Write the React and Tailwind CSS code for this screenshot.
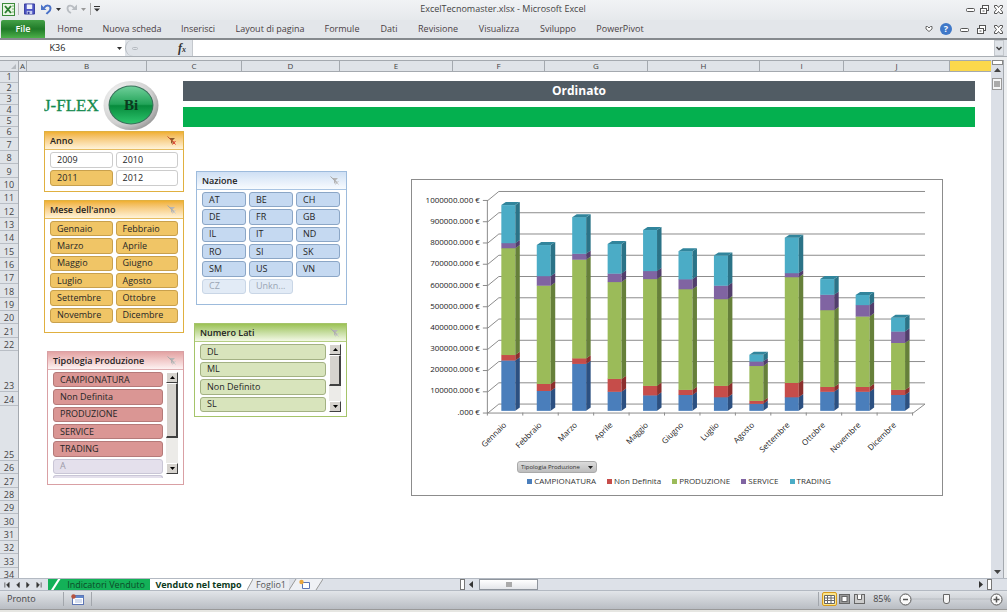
import { useState } from "react";
import clsx from "clsx";

const ribbonTabs = [
  { label: "Home", width: "w-[50px]" },
  { label: "Nuova scheda", width: "w-[74px]" },
  { label: "Inserisci", width: "w-[58px]" },
  { label: "Layout di pagina", width: "w-[86px]" },
  { label: "Formule", width: "w-[58px]" },
  { label: "Dati", width: "w-[36px]" },
  { label: "Revisione", width: "w-[62px]" },
  { label: "Visualizza", width: "w-[60px]" },
  { label: "Sviluppo", width: "w-[58px]" },
  { label: "PowerPivot", width: "w-[66px]" },
];

const columns = [
  { name: "A", width: "w-2" },
  { name: "B", width: "w-[120px]" },
  { name: "C", width: "w-[95px]" },
  { name: "D", width: "w-[98px]" },
  { name: "E", width: "w-[113px]" },
  { name: "F", width: "w-[92px]" },
  { name: "G", width: "w-[103px]" },
  { name: "H", width: "w-[112px]" },
  { name: "I", width: "w-[84px]" },
  { name: "J", width: "w-[106px]" },
];

// Altezze delle righe: le prime sei sono basse, 23 e 25 sono alte
function rowHeight(row) {
  if (row <= 6) return "h-[11px] leading-[10px]";
  if (row === 23) return "h-[41px] leading-[11px]";
  if (row === 25) return "h-[55px] leading-[11px]";
  return row % 3 === 0 ? "h-[14px] leading-[11px]" : "h-[13px] leading-[11px]";
}

const rows = Array.from({ length: 34 }, (_, i) => i + 1);

const anni = ["2009", "2010", "2011", "2012"];
const mesi = [
  "Gennaio", "Febbraio", "Marzo", "Aprile", "Maggio", "Giugno",
  "Luglio", "Agosto", "Settembre", "Ottobre", "Novembre", "Dicembre",
];
const nazioni = [
  "AT", "BE", "CH", "DE", "FR", "GB", "IL", "IT", "ND",
  "RO", "SI", "SK", "SM", "US", "VN", "CZ", "Unkn...",
];
const lati = ["DL", "ML", "Non Definito", "SL"];
const tipologie = ["CAMPIONATURA", "Non Definita", "PRODUZIONE", "SERVICE", "TRADING", "A"];

const series = [
  { name: "CAMPIONATURA", front: "#4a7ebb", side: "#2c5081", top: "#38639a" },
  { name: "Non Definita", front: "#c64d4a", side: "#8c2f2d", top: "#a03c3a" },
  { name: "PRODUZIONE", front: "#9bbb59", side: "#66803a", top: "#7c9848" },
  { name: "SERVICE", front: "#8064a2", side: "#523e6c", top: "#664f84" },
  { name: "TRADING", front: "#4bacc6", side: "#2b7387", top: "#31859c" },
];

// Valori in migliaia di euro, uno per serie
const ordinato = [
  [238, 26, 505, 24, 179],
  [94, 33, 465, 45, 146],
  [222, 26, 467, 28, 172],
  [90, 61, 458, 40, 139],
  [73, 45, 505, 38, 193],
  [75, 24, 476, 47, 132],
  [64, 54, 410, 64, 142],
  [33, 14, 165, 21, 31],
  [64, 68, 500, 19, 167],
  [90, 23, 363, 73, 73],
  [90, 23, 333, 54, 47],
  [75, 24, 222, 54, 64],
];

const themes = {
  orange: {
    box: "border-[#e0b040]",
    head: "from-[#f0b030] to-[#fff3d8] border-[#e6bd62]",
    on: "bg-[#f0c566] border-[#c8a04c]",
  },
  blue: {
    box: "border-[#9dbbdc]",
    head: "from-[#cfe0f4] to-[#f8fbfe] border-[#a9c4e2]",
    on: "bg-[#c5d9f1] border-[#8ba6c6]",
  },
  green: {
    box: "border-[#a5c46a]",
    head: "from-[#9cc254] to-[#f3f8e6] border-[#b4ce82]",
    on: "bg-[#d8e4bc] border-[#a3b183]",
  },
  red: {
    box: "border-[#d9a0a4]",
    head: "from-[#e3a3a3] to-[#fdf2f2] border-[#dfb0b3]",
    on: "bg-[#da9694] border-[#b57a79]",
  },
};

function ClearFilterIcon({ active }) {
  const color = active ? "#8a5a2c" : "#b5b5b5";
  return (
    <svg width="11" height="11" viewBox="0 0 11 11" aria-hidden="true">
      <path d="M3 3h6L6.500 5.500V9L5 8V5.500z" fill={color} />
      <path d="M6.500 6l3 3.500M9.500 6l-3 3.500" stroke={active ? "#d8342a" : "#c8c8c8"} />
      <path d="M1.500 1.500l6.500 6" stroke={active ? "#c4512a" : "#a8a8a8"} />
    </svg>
  );
}

function SlicerScrollbar({ thumb }) {
  const arrow =
    "flex h-[11px] w-full shrink-0 items-center justify-center border border-b-[#404040] border-r-[#404040] border-l-white border-t-white bg-[#d6d3ce]";
  return (
    <div className="flex w-3 shrink-0 flex-col bg-[#ecebe8]">
      <button type="button" aria-label="Scorri su" className={arrow}>
        <svg width="5" height="3" viewBox="0 0 5 3"><path d="M0 3L2.500 0 5 3z" /></svg>
      </button>
      <div className={clsx("w-full border border-b-2 border-r-2 border-[#404040] border-l-white border-t-white bg-[#d6d3ce]", thumb)} />
      <div className="flex-1" />
      <button type="button" aria-label="Scorri giù" className={arrow}>
        <svg width="5" height="3" viewBox="0 0 5 3"><path d="M0 0h5L2.500 3z" /></svg>
      </button>
    </div>
  );
}

function Slicer({ title, theme, items, cols, selected, disabled = [], onToggle, filtered, className, bodyClass, thumb, more }) {
  const t = themes[theme];
  return (
    <section className={clsx("flex flex-col border bg-white", t.box, className)}>
      <header className={clsx("flex h-[18px] shrink-0 items-center justify-between border-b bg-linear-to-b pl-[5px] pr-[6px]", t.head)}>
        <h2 className="text-[9px] font-semibold text-[#222]">{title}</h2>
        <button type="button" aria-label={`Cancella filtro ${title}`}>
          <ClearFilterIcon active={filtered} />
        </button>
      </header>
      <div className={clsx("flex gap-[3px] overflow-hidden pl-[5px] pt-0.5", bodyClass)}>
        <div className={clsx("grid flex-1 auto-rows-fr gap-x-[3px] gap-y-0.5", cols)}>
          {items.map((item) => {
            const off = disabled.includes(item);
            return (
              <button
                key={item}
                type="button"
                disabled={off}
                onClick={() => onToggle?.(item)}
                className={clsx(
                  "flex min-w-0 items-center rounded-[3px] border pl-[6px] text-left text-[9px] leading-3",
                  off && theme === "blue" && "border-[#c9d6e6] bg-[#e2ebf6] text-[#9aa5b4]",
                  off && theme !== "blue" && "border-[#c9c6d6] bg-[#e4e0ec] text-[#9c9aa8]",
                  !off && (selected.includes(item) ? t.on : "border-[#ccc] bg-white"),
                  !off && "text-[#262626]"
                )}
              >
                {item}
              </button>
            );
          })}
        </div>
        {thumb && <SlicerScrollbar thumb={thumb} />}
      </div>
      {more && <div className="ml-[5px] mr-5 mt-px h-[3px] rounded-t-[3px] border border-b-0 border-[#c9c6d6] bg-[#e4e0ec]" />}
    </section>
  );
}

function Logo() {
  return (
    <svg className="h-[50px] w-[116px] shrink-0" viewBox="0 0 116 50" role="img" aria-label="J-FLEX Bi">
      <defs>
        <radialGradient id="ring" cx="0.35" cy="0.35" r="0.75">
          <stop offset="0" stopColor="#ffffff" />
          <stop offset="0.700" stopColor="#d0d0d0" />
          <stop offset="1" stopColor="#8e8e8e" />
        </radialGradient>
        <linearGradient id="orb" x1="0" y1="0" x2="0" y2="1">
          <stop offset="0" stopColor="#6fcf9a" />
          <stop offset="0.480" stopColor="#22a358" />
          <stop offset="0.520" stopColor="#078b3c" />
          <stop offset="1" stopColor="#2cc46c" />
        </linearGradient>
      </defs>
      <text x="0" y="30" fontSize="17" fill="#138a4e" stroke="#138a4e" strokeWidth="0.300" className="font-['Liberation_Serif',serif]">J-FLEX</text>
      <ellipse cx="87" cy="24.500" rx="27.500" ry="24.500" fill="url(#ring)" />
      <ellipse cx="87" cy="24" rx="22.500" ry="19.500" fill="#39705a" />
      <ellipse cx="87" cy="24" rx="21.500" ry="18.500" fill="url(#orb)" />
      <text x="87" y="29" textAnchor="middle" fontSize="15" fontWeight="bold" fill="#0b3a1e" className="font-['Liberation_Serif',serif]">Bi</text>
    </svg>
  );
}

function Chart() {
  const base = 231;
  const scale = 0.2118;
  return (
    <svg className="block w-full" viewBox="0 0 531 278" role="img" aria-label="Ordinato per mese">
      <g stroke="#8c8c8c" fill="none">
        {Array.from({ length: 11 }, (_, i) => {
          const back = 11.5 + i * 21.3;
          const front = 20.5 + i * 21.3;
          return <path key={i} d={`M71 ${front}h5L87 ${back}H514`} />;
        })}
        <path d="M75.500 20V233.500H502L514 224.500" />
        {Array.from({ length: 13 }, (_, i) => (
          <path key={i} d={`M${75.5 + i * 35.5} 233v3`} />
        ))}
      </g>
      <g fontSize="8" fill="#222" textAnchor="end">
        {Array.from({ length: 11 }, (_, i) => (
          <text key={i} x="68" y={23 + i * 21.2}>
            {i === 10 ? ".000 €" : `${(10 - i) * 100000}.000 €`}
          </text>
        ))}
      </g>
      {ordinato.map((values, m) => {
        const x = 89.5 + m * 35.5;
        let y = base;
        return (
          <g key={mesi[m]}>
            {values.map((value, s) => {
              const h = value * scale;
              y -= h;
              return (
                <g key={series[s].name}>
                  <rect x={x} y={y} width="14" height={h + 0.3} fill={series[s].front} />
                  <path d={`M${x + 14} ${y}l4.500 -3v${h}l-4.500 3.300z`} fill={series[s].side} />
                  {s === 4 && <path d={`M${x} ${y}l4.500 -3h14l-4.500 3z`} fill={series[s].top} />}
                </g>
              );
            })}
          </g>
        );
      })}
      <g fontSize="8" fill="#222" textAnchor="end">
        {mesi.map((mese, m) => (
          <text key={mese} transform={`translate(${95 + m * 35.5} 246) rotate(-45)`}>{mese}</text>
        ))}
      </g>
    </svg>
  );
}

function WindowButtons({ gap = "gap-[3px]" }) {
  return (
    <div className={clsx("flex items-center text-[#555]", gap)}>
      <button type="button" aria-label="Riduci a icona">
        <svg width="11" height="11" viewBox="0 0 11 11" fill="#fff" stroke="currentColor"><rect x="1.500" y="4.500" width="8" height="3" rx="1" /></svg>
      </button>
      <button type="button" aria-label="Ripristina">
        <svg width="11" height="11" viewBox="0 0 11 11" fill="#fff" stroke="currentColor"><rect x="3.500" y="1.500" width="6" height="5" /><rect x="1.500" y="4.500" width="6" height="5" /><path d="M3.500 7h2" /></svg>
      </button>
      <button type="button" aria-label="Chiudi">
        <svg width="11" height="11" viewBox="0 0 11 11" fill="#fff" stroke="currentColor"><path d="M1.500 1.500h2.500l1.500 2 1.500-2h2.500v1.500L7.500 5.500l2 2.500v1.500H7l-1.500-2-1.500 2H1.500V8l2-2.500-2-2.500z" /></svg>
      </button>
    </div>
  );
}

function TitleBar() {
  return (
    <header className="grid h-5 shrink-0 grid-cols-[1fr_auto_1fr] items-center bg-linear-to-b from-[#f1f3f5] to-[#e6e9ec] pb-0.5 pl-0.5 pr-[3px] text-[#444]">
      <div className="flex items-center">
        <svg width="13" height="13" viewBox="0 0 13 13">
          <rect x="0.500" y="0.500" width="12" height="12" fill="#e9f5e4" stroke="#3b8a3a" />
          <path d="M3 3l6 7M9 3l-6 7" stroke="#2b7d2e" strokeWidth="1.900" />
          <path d="M10 3h2M10 6h2M10 9h2" stroke="#74b66d" />
        </svg>
        <span className="mx-[3px] h-3 w-px bg-[#bbb]" />
        <button type="button" aria-label="Salva" className="ml-0.5">
          <svg width="11" height="12" viewBox="0 0 12 12">
            <path d="M0.500 0.500h11v11h-11z" fill="#4d55c4" stroke="#31389a" />
            <path d="M3 1h6v5H3z" fill="#eef1fb" />
            <path d="M3 8h6v3.500H3z" fill="#c8cef0" />
            <path d="M4 9h2v2.500H4z" fill="#31389a" />
          </svg>
        </button>
        <button type="button" aria-label="Annulla" className="ml-[6px] flex items-center gap-1">
          <svg width="11" height="12" viewBox="0 0 11 12" fill="none">
            <path d="M3 5C5 1.500 9.500 2 9.500 5.500 9.500 8.500 7 9 5.500 11" stroke="#4a72c8" strokeWidth="2" />
            <path d="M0 1.500V7h5.500z" fill="#4a72c8" />
          </svg>
          <svg width="5" height="3" viewBox="0 0 5 3"><path d="M0 0h5L2.500 3z" fill="#333" /></svg>
        </button>
        <button type="button" aria-label="Ripeti" className="ml-[5px] flex items-center gap-1">
          <svg width="11" height="12" viewBox="0 0 11 12" fill="none">
            <path d="M8 5C6 1.500 1.500 2 1.500 5.500 1.500 8 3 9 5 10" stroke="#b9bdc2" strokeWidth="1.800" />
            <path d="M11 1.500V7H5.500z" fill="#b9bdc2" />
          </svg>
          <svg width="5" height="3" viewBox="0 0 5 3"><path d="M0 0h5L2.500 3z" fill="#999" /></svg>
        </button>
        <span className="ml-1 mr-[3px] h-3 w-px bg-[#aaa]" />
        <button type="button" aria-label="Personalizza barra di accesso rapido">
          <svg width="6" height="6" viewBox="0 0 6 6"><path d="M0 0.500h6" stroke="#333" /><path d="M0 2.500h6L3 5.500z" fill="#333" /></svg>
        </button>
      </div>
      <h1 className="text-[9px] leading-[14px]">ExcelTecnomaster.xlsx - Microsoft Excel</h1>
      <div className="flex justify-end">
        <WindowButtons />
      </div>
    </header>
  );
}

function Ribbon() {
  return (
    <nav className="flex h-5 shrink-0 items-stretch border-b-2 border-[#868a8e] bg-[#e3e6ea] pl-px pr-[3px] text-[9px] text-[#4a3f44]">
      <button type="button" className="w-11 rounded-t-[2px] bg-linear-to-b from-[#43a047] via-[#1f7a28] to-[#4cb04a] font-semibold text-white">
        File
      </button>
      {ribbonTabs.map((tab) => (
        <button key={tab.label} type="button" className={clsx("whitespace-nowrap text-center", tab.width)}>
          {tab.label}
        </button>
      ))}
      <div className="ml-auto flex items-center gap-[7px]">
        <svg width="8" height="8" viewBox="0 0 8 8" fill="#fff" stroke="#666"><path d="M1 1.500h1.500L4 3l1.500-1.500H7V4L4 6.500 1 4z" /></svg>
        <button type="button" aria-label="Guida" className="flex h-3 w-3 items-center justify-center rounded-full bg-[#3f78c8] text-[9px] font-bold text-white">?</button>
        <WindowButtons gap="gap-1.5" />
      </div>
    </nav>
  );
}

function FormulaBar() {
  return (
    <div className="flex h-[17px] shrink-0 border-b border-[#a9aeb4] bg-[#dfe3e8] text-[10px]">
      <input aria-label="Casella nome" defaultValue="K36" className="w-[113px] bg-white pl-0.5 text-center text-[9px] text-[#222] outline-none" />
      <button type="button" aria-label="Apri casella nome" className="flex w-3 items-center justify-center bg-white">
        <svg width="5" height="3" viewBox="0 0 5 3"><path d="M0 0h5L2.500 3z" fill="#333" /></svg>
      </button>
      <div className="flex w-[67px] items-center justify-between rounded-l-full border-l border-[#b5bac0] bg-[#dfe3e8] px-1.5">
        <span className="h-[3px] w-1.5 rounded-full border border-[#b5bac0]" />
        <button type="button" aria-label="Inserisci funzione" className="font-['Liberation_Serif',serif] text-[12px] leading-none font-bold text-[#333] italic">
          f<span className="text-[8px]">x</span>
        </button>
      </div>
      <input aria-label="Barra della formula" className="min-w-0 flex-1 border-l border-[#c4c8cd] bg-white px-1 outline-none" />
      <button type="button" aria-label="Espandi barra della formula" className="mr-[3px] flex w-[10px] items-center justify-center border border-[#c4c8cd]">
        <svg width="6" height="5" viewBox="0 0 6 5" fill="none" stroke="#444" strokeWidth="1.500"><path d="M0.500 1L3 3.500 5.500 1" /></svg>
      </button>
    </div>
  );
}

function VerticalScrollbar() {
  return (
    <div className="mr-[3px] flex w-[13px] shrink-0 flex-col items-center border-r border-[#a4a9af] bg-[#dbdfe6]">
      <div className="mb-[3px] h-[5px] w-[11px] shrink-0 border border-[#888] bg-white" />
      <button type="button" aria-label="Scorri su" className="mb-1.5">
        <svg width="7" height="4" viewBox="0 0 7 4"><path d="M0 4L3.500 0 7 4z" fill="#444" /></svg>
      </button>
      <div className="flex h-3 w-[10px] shrink-0 items-center justify-center border border-[#999] bg-[#f4f5f6]">
        <div className="h-1.5 w-1.5 bg-[#aaa]" />
      </div>
      <button type="button" aria-label="Scorri giù" className="mt-auto mb-1">
        <svg width="7" height="4" viewBox="0 0 7 4"><path d="M0 0h7L3.500 4z" fill="#444" /></svg>
      </button>
    </div>
  );
}

function SheetTabs() {
  const navs = ["M1 0.500v6M6 0.500L3 3.500l3 3z", "M5 0.500L2 3.500l3 3z", "M2 0.500l3 3-3 3z", "M1 0.500l3 3-3 3zM6 0.500v6"];
  const labels = ["Primo foglio", "Foglio precedente", "Foglio successivo", "Ultimo foglio"];
  return (
    <div className="flex h-[13px] shrink-0 items-stretch border-y border-[#b3b9c2] bg-[#dde1e8] pr-[3px] text-[9px] leading-[11px]">
      <div className="flex w-12 items-center justify-around pr-1 pl-0.5">
        {navs.map((d, i) => (
          <button key={d} type="button" aria-label={labels[i]}>
            <svg width="6" height="6" viewBox="0 0 7 7"><path d={d} fill="#333" stroke="#333" strokeWidth="0.800" /></svg>
          </button>
        ))}
      </div>
      <button type="button" className="flex w-[102px] items-center bg-[#13b158] text-[#0c4a28]">
        <svg className="h-full w-[14px]" viewBox="0 0 14 11" preserveAspectRatio="none"><path d="M3 11L10 0h2.500L5.500 11z" fill="#fff" /></svg>
        <span className="flex-1 text-center">Indicatori Venduto</span>
      </button>
      <button type="button" className="w-[97px] bg-white text-center font-bold whitespace-nowrap text-[#0c3a20]">Venduto nel tempo</button>
      <button type="button" className="flex w-[42px] items-center bg-[#e9ecf1] text-[#555]">
        <svg className="h-full w-[6px]" viewBox="0 0 6 11" preserveAspectRatio="none"><path d="M0 0h6L0 11z" fill="#fff" /><path d="M0 11L6 0" stroke="#999" /></svg>
        <span className="flex-1 text-center">Foglio1</span>
      </button>
      <button type="button" aria-label="Inserisci foglio di lavoro">
        <svg width="34" height="11" viewBox="0 0 34 11">
          <path d="M0 11L7 0H34L27 11z" fill="#eff1f5" /><path d="M0 11L7 0M27 11L34 0" stroke="#999" />
          <path d="M13.500 3.500h7v6h-7z" fill="#fff" stroke="#5d76b5" />
          <circle cx="12.500" cy="3" r="2.200" fill="#eba73c" />
        </svg>
      </button>
      <div className="flex-[138]" />
      <div className="w-[5px] border border-[#777] bg-white" />
      <button type="button" aria-label="Scorri a sinistra" className="px-1">
        <svg width="4" height="7" viewBox="0 0 4 7"><path d="M4 0v7L0 3.500z" fill="#333" /></svg>
      </button>
      <div className="ml-[2px] flex w-[59px] items-center justify-center border border-[#8f959d] bg-linear-to-b from-white to-[#e4e6ea]">
        <div className="h-[5px] w-1.5 bg-[#aaa]" />
      </div>
      <div className="flex-[440]" />
      <button type="button" aria-label="Scorri a destra" className="px-1">
        <svg width="4" height="7" viewBox="0 0 4 7"><path d="M0 0v7l4-3.500z" fill="#333" /></svg>
      </button>
      <div className="mr-3 w-[5px] border border-[#777] bg-white" />
    </div>
  );
}

function StatusBar() {
  const [zoom, setZoom] = useState(85);
  return (
    <footer className="flex h-[18px] shrink-0 items-center bg-linear-to-b from-[#e2e5e9] to-[#b9bdc3] pr-1 pb-0.5 pl-[7px] text-[9px] text-[#444]">
      <span className="w-14">Pronto</span>
      <div className="flex h-[14px] items-center border-x border-[#a2a6ac] px-[7px]">
        <svg width="13" height="11" viewBox="0 0 13 11">
          <rect x="1.500" y="1.500" width="11" height="9" fill="#fff" stroke="#5d76b5" />
          <path d="M2 2h10v2H2z" fill="#5f87cc" />
          <path d="M4 6h7M4 8h7" stroke="#a9bbdf" />
          <circle cx="2.500" cy="2.500" r="2.200" fill="#b6523c" />
        </svg>
      </div>
      <div className="ml-auto flex items-center border-l border-[#a2a6ac] pl-[3px]">
        <button type="button" aria-label="Normale" className="flex h-[14px] w-[15px] items-center justify-center rounded-[2px] border border-[#d79a1c] bg-[#fde68a]">
          <svg width="11" height="9" viewBox="0 0 11 9" fill="#fff" stroke="#666"><path d="M0.500 0.500h10v8h-10zM0.500 3h10M0.500 5.500h10M3.500 0.500v8M7 0.500v8" /></svg>
        </button>
        <button type="button" aria-label="Layout di pagina" className="ml-0.5">
          <svg width="11" height="10" viewBox="0 0 11 10" stroke="#666"><rect x="0.500" y="0.500" width="10" height="9" fill="#999" /><rect x="3" y="2.500" width="5" height="5" fill="#fff" /></svg>
        </button>
        <button type="button" aria-label="Anteprima interruzioni di pagina" className="ml-1">
          <svg width="11" height="10" viewBox="0 0 11 10" stroke="#666"><rect x="0.500" y="0.500" width="10" height="9" fill="#ccc" /><path d="M3.500 0.500v5h4v-5" fill="#fff" /></svg>
        </button>
        <label htmlFor="zoom" className="w-[34px] text-center">{zoom}%</label>
        <button type="button" aria-label="Zoom indietro" onClick={() => setZoom((z) => Math.max(10, z - 5))}>
          <svg width="13" height="13" viewBox="0 0 13 13" fill="#fafafa" stroke="#555"><circle cx="6.500" cy="6.500" r="5.500" /><path d="M4 6.500h5" strokeWidth="1.500" /></svg>
        </button>
        <input
          id="zoom"
          type="range"
          min="10"
          max="180"
          value={zoom}
          onChange={(e) => setZoom(Number(e.target.value))}
          className="h-3 w-[78px] appearance-none bg-linear-to-b from-transparent from-45% via-[#8d9197] via-50% to-transparent to-55% [&::-webkit-slider-thumb]:h-[10px] [&::-webkit-slider-thumb]:w-[7px] [&::-webkit-slider-thumb]:appearance-none [&::-webkit-slider-thumb]:rounded-b-[3px] [&::-webkit-slider-thumb]:border [&::-webkit-slider-thumb]:border-[#666] [&::-webkit-slider-thumb]:bg-[#f5f5f5]"
        />
        <button type="button" aria-label="Zoom avanti" onClick={() => setZoom((z) => Math.min(180, z + 5))}>
          <svg width="13" height="13" viewBox="0 0 13 13" fill="#fafafa" stroke="#555"><circle cx="6.500" cy="6.500" r="5.500" /><path d="M3.500 6.500h6M6.500 3.500v6" strokeWidth="1.500" /></svg>
        </button>
      </div>
    </footer>
  );
}

export default function App() {
  const [anno, setAnno] = useState("2011");

  return (
    <div className="flex h-screen flex-col overflow-hidden bg-[#eceef0] font-['Open_Sans','Noto_Sans',sans-serif]">
      <TitleBar />
      <Ribbon />
      <FormulaBar />

      {/* Foglio di lavoro */}
      <div className="mt-[3px] flex min-h-0 flex-1">
        <div className="flex min-w-0 flex-1 flex-col">
          {/* Intestazioni di colonna */}
          <div className="flex h-3 shrink-0 border-y border-[#a4a9af] bg-[#dfe3e8] text-[8px] leading-[10px] text-[#444]">
            <div className="flex w-[19px] shrink-0 items-end justify-end border-r border-[#a4a9af] p-0.5">
              <svg width="5" height="5" viewBox="0 0 5 5"><path d="M5 0v5H0z" fill="#b5bac0" /></svg>
            </div>
            {columns.map((col) => (
              <div key={col.name} className={clsx("border-r border-[#a4a9af] text-center", col.width)}>{col.name}</div>
            ))}
            <div className="flex-1 bg-[#fbd84b]" />
          </div>

          <div className="flex min-h-0 flex-1 overflow-hidden">
            {/* Intestazioni di riga */}
            <ol className="w-[19px] shrink-0 border-r border-[#a4a9af] bg-[#dfe3e8] text-center text-[9px] text-[#444]">
              {rows.map((row) => (
                <li key={row} className={clsx("flex items-end justify-center border-b border-[#b9bec5]", rowHeight(row))}>{row}</li>
              ))}
            </ol>

            <main className="flex-1 bg-white pt-[9px] pl-[25px]">
              <div className="flex items-start pr-4">
                <Logo />
                <div className="ml-[23px] flex-1 space-y-1.5">
                  <h2 className="h-5 bg-[#515c64] text-center text-[12px] leading-5 font-bold text-white">Ordinato</h2>
                  <div className="h-5 bg-[#04b04f]" />
                </div>
              </div>

              <div className="flex items-start pr-12">
                <div className="flex w-[140px] shrink-0 flex-col">
                  <Slicer title="Anno" theme="orange" items={anni} cols="grid-cols-2" selected={[anno]} onToggle={setAnno} filtered className="h-[61px]" bodyClass="h-9 pr-[5px]" />
                  <Slicer title="Mese dell'anno" theme="orange" items={mesi} cols="grid-cols-2" selected={mesi} className="mt-2 h-[133px]" bodyClass="h-[104px] pr-[5px]" />
                  <Slicer title="Tipologia Produzione" theme="red" items={tipologie} cols="grid-cols-1" selected={tipologie} disabled={["A"]} className="mt-[18px] ml-[3px] h-[134px]" bodyClass="h-[104px] pr-[5px]" thumb="h-[55px]" more />
                </div>

                <div className="mt-10 ml-[10px] flex w-[153px] shrink-0 flex-col">
                  <Slicer title="Nazione" theme="blue" items={nazioni} cols="grid-cols-3" selected={nazioni} disabled={["CZ", "Unkn..."]} className="ml-0.5 h-[134px]" bodyClass="h-[104px] pr-[6px]" />
                  <Slicer title="Numero Lati" theme="green" items={lati} cols="grid-cols-1" selected={lati} className="mt-[18px] h-[94px]" bodyClass="h-[70px] pr-[5px]" thumb="h-[31px]" />
                </div>

                {/* Grafico pivot */}
                <section className="mt-12 ml-16 flex h-[317px] min-w-0 flex-1 flex-col border border-[#8c8c8c] bg-white text-[#333]">
                  <Chart />
                  <div className="relative mt-1 ml-[105px] w-20">
                    <select aria-label="Tipologia Produzione" className="block h-3 w-full appearance-none rounded-[3px] border border-[#aaa] bg-linear-to-b from-[#dcdcdc] to-[#bdbdbd] pl-[3px] text-[6px] leading-[10px]">
                      <option>Tipologia Produzione</option>
                    </select>
                    <svg className="pointer-events-none absolute top-[5px] right-1" width="5" height="3" viewBox="0 0 5 3"><path d="M0 0h5L2.500 3z" fill="#222" /></svg>
                  </div>
                  <ul className="mt-0.5 flex justify-center gap-[11px] pl-1 text-[8px] leading-3">
                    {series.map((s) => (
                      <li key={s.name} className="flex items-center gap-0.5">
                        <svg width="5" height="5"><rect width="5" height="5" fill={s.front} /></svg>
                        {s.name}
                      </li>
                    ))}
                  </ul>
                </section>
              </div>
            </main>
          </div>
        </div>
        <VerticalScrollbar />
      </div>

      <SheetTabs />
      <StatusBar />
      <div className="h-[3px] shrink-0 border-t border-[#999] bg-[#e6e6e2]" />
    </div>
  );
}
